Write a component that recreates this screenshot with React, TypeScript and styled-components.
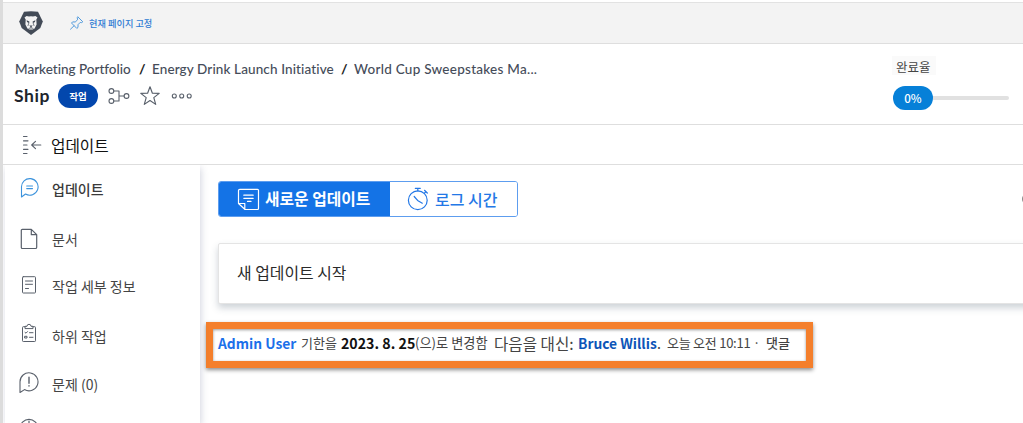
import React from "react";
import styled, { createGlobalStyle } from "styled-components";

const GlobalStyle = createGlobalStyle`
  * { box-sizing: border-box; }
  body { margin: 0; background: #fff; overflow: hidden; }
`;

const Page = styled.div`
  width: 1023px;
  height: 423px;
  padding-top: 2px;
  overflow: hidden;
  background: #fff;
  border-left: 3px solid #dcdcdc;
  display: flex;
  flex-direction: column;
  font-family: "Noto Sans CJK KR", sans-serif;
  color: #444;
`;

const Text = styled.span<{
  $size: number;
  $weight?: number;
  $color?: string;
  $space?: number;
  $width?: number;
  $latin?: boolean;
}>`
  display: block;
  flex: none;
  white-space: pre;
  line-height: 20px;
  font-size: ${(p) => p.$size}px;
  font-weight: ${(p) => p.$weight ?? 400};
  color: ${(p) => p.$color ?? "#444"};
  letter-spacing: ${(p) => p.$space ?? 0}px;
  width: ${(p) => (p.$width ? `${p.$width}px` : "auto")};
  ${(p) => p.$latin && `font-family: Lato, sans-serif; font-variant-ligatures: none;`}
`;

const TopBar = styled.header`
  flex: none;
  height: 42px;
  display: flex;
  align-items: center;
  padding-left: 16px;
  background: #f3f3f3;
  border-top: 1px solid #e2e2e2;
  border-bottom: 1px solid #dedede;
`;

const PinLink = styled.div`
  display: flex;
  align-items: center;
  gap: 4px;
  margin-left: 26px;
  padding-bottom: 1px;
`;

const ObjectHeader = styled.section`
  flex: none;
  height: 81px;
  display: flex;
  justify-content: space-between;
  border-bottom: 1px solid #dedede;
`;

const Identity = styled.div`
  padding: 15px 0 0 12px;
`;

const Breadcrumb = styled.nav`
  display: flex;
  height: 20px;
`;

const NameRow = styled.div`
  display: flex;
  align-items: center;
  height: 24px;
  margin-top: 5px;
  margin-left: -1px;
`;

const TypePill = styled.span`
  display: flex;
  align-items: center;
  justify-content: center;
  width: 40px;
  height: 24px;
  margin: 0 10px 0 8px;
  padding-bottom: 1px;
  border-radius: 12px;
  background: #0347ad;
`;

const StarSlot = styled.span`
  display: flex;
  margin: 0 11px 0 10px;
`;

const Progress = styled.div`
  width: 131px;
  padding-top: 12px;
`;

const ProgressLabel = styled.div`
  width: 44px;
  height: 19px;
  padding: 1px 0 0 4px;
  background: #fafafa;
`;

const ProgressTrack = styled.div`
  display: flex;
  align-items: center;
  height: 24px;
  margin-top: 11px;
  margin-left: 1px;
`;

const ProgressPill = styled.span`
  display: flex;
  align-items: center;
  justify-content: center;
  width: 40px;
  height: 24px;
  border-radius: 12px;
  background: #0680d8;
`;

const ProgressRail = styled.span`
  width: 76px;
  height: 4px;
  border-radius: 0 2px 2px 0;
  background: #e1e1e1;
`;

const SectionTitle = styled.div`
  flex: none;
  height: 40px;
  display: flex;
  align-items: center;
  gap: 9px;
  padding-left: 19px;
  border-bottom: 1px solid #dedede;
`;

const TitleSlot = styled.div`
  padding-top: 3px;
`;

const Body = styled.div`
  flex: 1;
  min-height: 0;
  display: flex;
`;

const Sidebar = styled.aside`
  flex: none;
  width: 195px;
  margin-left: 2px;
  box-shadow: 1px 3px 7px rgba(70, 80, 120, 0.24);
  background: #fff;
  clip-path: inset(0 -10px -10px -3px);
`;

const SideItem = styled.div<{ $height: number }>`
  display: flex;
  align-items: center;
  height: ${(p) => p.$height}px;
  padding-left: 14px;
`;

const SideLabel = styled.div`
  padding-bottom: 1px;
`;

const IconSlot = styled.span<{ $lift?: number }>`
  flex: none;
  display: flex;
  width: 33px;
  padding-bottom: ${(p) => p.$lift ?? 0}px;
`;

const Main = styled.main`
  flex: 1;
  min-width: 0;
  padding: 16px 0 0 18px;
`;

const ActionRow = styled.div`
  display: flex;
  justify-content: space-between;
  align-items: center;
  height: 36px;
`;

const ToggleGroup = styled.div`
  display: flex;
  width: 300px;
  height: 36px;
  border: 1px solid #5d9def;
  border-radius: 3px;
  overflow: hidden;
`;

const Toggle = styled.div<{ $active?: boolean }>`
  display: flex;
  align-items: center;
  gap: ${(p) => (p.$active ? 5 : 6)}px;
  width: ${(p) => (p.$active ? 171 : 127)}px;
  padding-left: ${(p) => (p.$active ? 18 : 17)}px;
  background: ${(p) => (p.$active ? "#1473e6" : "#fff")};
`;

const RoundControl = styled.span`
  flex: none;
  width: 12px;
  height: 12px;
  margin-right: -11px;
  border-radius: 50%;
  background: #8a8a8a;
`;

const Composer = styled.div`
  height: 61px;
  margin-top: 26px;
  margin-right: -8px;
  padding: 19px 0 0 18px;
  border: 1px solid #e4e4e4;
  border-radius: 2px;
  background: #fff;
  box-shadow: 0 4px 7px rgba(60, 80, 100, 0.25);
`;

const Highlight = styled.div`
  display: flex;
  width: 607px;
  height: 46px;
  margin: 18px 0 0 -12px;
  padding: 4px 0 0 5px;
  border: 7px solid #f47f2c;
  background: #fff;
  box-shadow: 0 2px 4px rgba(0, 0, 0, 0.45), inset 0 1px 3px rgba(0, 0, 0, 0.4);
`;

const stroke = (color: string, width = 1) => ({
  fill: "none",
  stroke: color,
  strokeWidth: width,
  strokeLinecap: "round" as const,
  strokeLinejoin: "round" as const,
});

const INK = "#59606b";

const LionLogo = () => (
  <svg width="24" height="24" viewBox="0 0 24 24">
    <path d="M5 .8Q12-.4 19 .8L23.8 10.5 21.3 17 12 24 2.7 17 .2 10.5Z" fill="#434b57" />
    <path d="M5.5 6.6 7.6 5 10 5.6 12 5.2 14 5.6 16.4 5 18.5 6.6 17.3 8.6 17.6 13.5 15.6 17.4 13.6 18.6H10.4L8.4 17.4 6.4 13.5 6.7 8.6Z" fill="#f3f3f3" />
    <path d="M7.6 9.2 10.4 10.5 9.9 11.9 8 11ZM16.4 9.2 13.6 10.5 14.1 11.9 16 11ZM10.3 14.6H13.7L12 16.2Z" fill="#434b57" />
    <path d="M9.9 11.9 9 14.6M14.1 11.9 15 14.6M12 15.5V16.8M10 17.4 12 16.8 14 17.4" {...stroke("#434b57", 0.7)} />
  </svg>
);

const PinIcon = () => (
  <svg width="16" height="16" viewBox="0 0 16 16" {...stroke("#529bdd")}>
    <path d="M9 2 13.8 6.8 12.7 7.6 11.2 7.4 9 9.7 9 12.4 7.8 13.4 2.5 8 3.6 6.9 6.2 7 8.6 4.8 8.3 3ZM5.1 10.7 1.5 14.2" />
  </svg>
);

const HierarchyIcon = () => (
  <svg width="22" height="18" viewBox="0 0 22 18" {...stroke(INK, 1.1)}>
    <circle cx="3.4" cy="4" r="2.4" />
    <circle cx="3.4" cy="14" r="2.4" />
    <circle cx="18.5" cy="9" r="2.4" />
    <path d="M5.8 4H11V14H5.8M11 9H16.1" />
  </svg>
);

const StarIcon = () => (
  <svg width="20" height="20" viewBox="0 0 20 20" {...stroke(INK, 1.15)}>
    <path d="M10 .8 12.4 7.2 19.2 7.4 13.8 11.6 15.7 18.4 10 14.5 4.3 18.4 6.2 11.6 .8 7.4 7.6 7.2Z" />
  </svg>
);

const DotsIcon = () => (
  <svg width="22" height="8" viewBox="0 0 22 8" {...stroke(INK, 1.1)}>
    <circle cx="3.3" cy="4" r="2" />
    <circle cx="10.7" cy="4" r="2" />
    <circle cx="18.2" cy="4" r="2" />
  </svg>
);

const CollapseIcon = () => (
  <svg width="20" height="20" viewBox="0 0 20 20" {...stroke(INK, 1.15)}>
    <path d="M1.5 1.5H5M1.5 5.8H6M1.5 10H5M1.5 14.3H6M1.5 18.5H5M9.7 10H18.8M13.5 6.4 9.7 10 13.5 13.6" />
  </svg>
);

const BubbleIcon = ({ alert }: { alert?: boolean }) => (
  <svg width="20" height="22" viewBox="0 0 20 22" {...stroke(alert ? INK : "#3c93dc", 1.1)}>
    <path d={alert ? "M1 20.5V10A9 9 0 1 1 5.5 17.6Z" : "M2.5 20V10.5A8.3 8.3 0 1 1 6.5 17Z"} />
    {alert ? <path d="M10 5.2V11.2M10 13.7V14.1" strokeWidth="1.4" /> : <path d="M7.7 9H13.5M7.7 11.6H13.5" />}
  </svg>
);

const DocumentIcon = () => (
  <svg width="20" height="22" viewBox="0 0 20 22" {...stroke(INK, 1.2)}>
    <path d="M3.3 1.3H12.3L17.7 6.7V19.2Q17.7 20.5 16.4 20.5H3.3Q2.3 20.5 2.3 19.2V2.3Q2.3 1.3 3.3 1.3ZM12.3 1.3V6.7H17.7" />
  </svg>
);

const DetailsIcon = () => (
  <svg width="20" height="20" viewBox="0 0 20 20" {...stroke(INK)}>
    <rect x="3.5" y="1.7" width="13" height="16.3" rx="0.8" />
    <path d="M6.5 6H13.5M6.5 9.3H13.5M6.5 13.5H9.5" />
  </svg>
);

const ClipboardIcon = () => (
  <svg width="20" height="20" viewBox="0 0 20 20" {...stroke(INK)}>
    <path d="M6 3.7H4.3Q3.5 3.7 3.5 4.5V17.7Q3.5 18.5 4.3 18.5H15.7Q16.5 18.5 16.5 17.7V4.5Q16.5 3.7 15.7 3.7H14M6 5.2V3.3H8A2 2 0 0 1 12 3.3H14V5.2Z" />
    <path d="M6 9.4 7 10.2 8.5 8.6M10.5 9.7H14M6 13.3H8V15H6ZM10.5 14.3H14" />
  </svg>
);

const ClockIcon = () => (
  <svg width="20" height="20" viewBox="0 0 20 20" {...stroke(INK, 1.2)}>
    <circle cx="10" cy="10" r="8.7" />
    <path d="M10 3V10H14" />
  </svg>
);

const NoteIcon = () => (
  <svg width="23" height="23" viewBox="0 0 23 23" {...stroke("#fff", 1.2)}>
    <path d="M2.8 1.3H20.5Q21.5 1.3 21.5 2.3V20.5Q21.5 21.5 20.5 21.5H8L1.5 15.5V2.5Q1.5 1.3 2.8 1.3ZM1.5 15.5H7.8V21.5M6.8 7.2H16.2M6.8 10.3H16.2M10.5 13.4H14" />
  </svg>
);

const StopwatchIcon = () => (
  <svg width="22" height="24" viewBox="0 0 22 24" {...stroke("#2478e6", 1.2)}>
    <circle cx="10.8" cy="13.3" r="9.4" />
    <path d="M8.3 1.3H13.3M10.8 1.3V3.9M17.5 3.3 20.3 6M18.7 4.8 17.4 6.2M7.2 9.5 10.6 13.4 15.3 16.2" />
  </svg>
);

const navItems = [
  { label: "업데이트", height: 48, icon: <BubbleIcon />, lift: 2, weight: 500, color: "#3a3a3a" },
  { label: "문서", height: 53, icon: <DocumentIcon />, lift: 1 },
  { label: "작업 세부 정보", height: 40, icon: <DetailsIcon />, lift: 2 },
  { label: "하위 작업", height: 60, icon: <ClipboardIcon />, lift: 6 },
  { label: "문제 (0)", height: 36, icon: <BubbleIcon alert />, lift: 2 },
  { label: "", height: 52, icon: <ClockIcon />, lift: 0 },
];

export default function App() {
  return (
    <>
      <GlobalStyle />
      <Page>
        <TopBar>
          <LionLogo />
          <PinLink>
            <PinIcon />
            <Text $size={9.2} $weight={500} $color="#2f7cd3">현재 페이지 고정</Text>
          </PinLink>
        </TopBar>

        <ObjectHeader>
          <Identity>
            <Breadcrumb>
              <Text $latin $size={13.5} $weight={500} $color="#454c59" $width={124}>Marketing Portfolio</Text>
              <Text $latin $size={14} $weight={700} $color="#222" $width={13}>/</Text>
              <Text $latin $size={13.5} $weight={500} $color="#454c59" $space={0.12} $width={189}>Energy Drink Launch Initiative</Text>
              <Text $latin $size={14} $weight={700} $color="#222" $width={13}>/</Text>
              <Text $latin $size={13.5} $weight={500} $color="#454c59" $space={0.26}>World Cup Sweepstakes Ma...</Text>
            </Breadcrumb>
            <NameRow>
              <Text $latin $size={17.5} $weight={700} $color="#20242c" $space={0.6} $width={36}>Ship</Text>
              <TypePill>
                <Text $size={9.5} $weight={700} $color="#fff">작업</Text>
              </TypePill>
              <HierarchyIcon />
              <StarSlot><StarIcon /></StarSlot>
              <DotsIcon />
            </NameRow>
          </Identity>
          <Progress>
            <ProgressLabel>
              <Text $size={12.5}>완료율</Text>
            </ProgressLabel>
            <ProgressTrack>
              <ProgressPill>
                <Text $size={11.5} $weight={500} $color="#fff">0%</Text>
              </ProgressPill>
              <ProgressRail />
            </ProgressTrack>
          </Progress>
        </ObjectHeader>

        <SectionTitle>
          <CollapseIcon />
          <TitleSlot>
            <Text $size={15.7} $color="#111">업데이트</Text>
          </TitleSlot>
        </SectionTitle>

        <Body>
          <Sidebar>
            {navItems.map((item) => (
              <SideItem key={item.label} $height={item.height}>
                <IconSlot $lift={item.lift}>{item.icon}</IconSlot>
                <SideLabel>
                  <Text $size={14} $weight={item.weight} $color={item.color}>{item.label}</Text>
                </SideLabel>
              </SideItem>
            ))}
          </Sidebar>
          <Main>
            <ActionRow>
              <ToggleGroup>
                <Toggle $active>
                  <NoteIcon />
                  <Text $size={15.8} $weight={700} $color="#fff">새로운 업데이트</Text>
                </Toggle>
                <Toggle>
                  <StopwatchIcon />
                  <Text $size={16} $weight={500} $color="#2478e6">로그 시간</Text>
                </Toggle>
              </ToggleGroup>
              <RoundControl />
            </ActionRow>
            <Composer>
              <Text $size={15.9} $color="#2a2a2a">새 업데이트 시작</Text>
            </Composer>
            <Highlight>
              <Text $size={13.8} $weight={700} $color="#1b70ea" $width={83}>Admin User</Text>
              <Text $size={13} $width={40}>기한을</Text>
              <Text $size={14.2} $weight={700} $color="#111" $width={74}>2023. 8. 25</Text>
              <Text $size={13.2} $width={79}>(으)로 변경함</Text>
              <Text $size={15.6} $width={84}>다음을 대신:</Text>
              <Text $size={13.8} $weight={700} $color="#0d55b8" $width={79}>Bruce Willis</Text>
              <Text $size={14.3} $width={10}>.</Text>
              <Text $size={13} $space={-0.25} $width={99}>오늘 오전 10:11 ·</Text>
              <Text $size={13} $weight={500}>댓글</Text>
            </Highlight>
          </Main>
        </Body>
      </Page>
    </>
  );
}
